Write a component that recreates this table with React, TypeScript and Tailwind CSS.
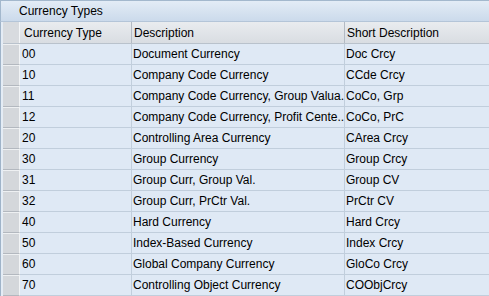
const rows = [
  { code: '00', desc: 'Document Currency', short: 'Doc Crcy' },
  { code: '10', desc: 'Company Code Currency', short: 'CCde Crcy' },
  { code: '11', desc: 'Company Code Currency, Group Valua..', short: 'CoCo, Grp' },
  { code: '12', desc: 'Company Code Currency, Profit Cente..', short: 'CoCo, PrC' },
  { code: '20', desc: 'Controlling Area Currency', short: 'CArea Crcy' },
  { code: '30', desc: 'Group Currency', short: 'Group Crcy' },
  { code: '31', desc: 'Group Curr, Group Val.', short: 'Group CV' },
  { code: '32', desc: 'Group Curr, PrCtr Val.', short: 'PrCtr CV' },
  { code: '40', desc: 'Hard Currency', short: 'Hard Crcy' },
  { code: '50', desc: 'Index-Based Currency', short: 'Index Crcy' },
  { code: '60', desc: 'Global Company Currency', short: 'GloCo Crcy' },
  { code: '70', desc: 'Controlling Object Currency', short: 'COObjCrcy' },
];

const cols = 'grid grid-cols-[17px_112px_213px_1fr]';

export default function App() {
  return (
    <div
      className="w-[489px] h-[296px] overflow-hidden bg-[#dfe9f5] text-[12px] leading-none text-black"
      style={{ fontFamily: '"Liberation Sans", Arial, sans-serif' }}
    >
      {/* Title bar */}
      <div className="h-[22px] flex items-center pl-[18px] border-t border-l border-[#a3b8cd] border-b-[#b4c5d8] border-b bg-gradient-to-b from-[#e3ecf6] to-[#cbdaeb]">
        Currency Types
      </div>

      <div className="border-l border-[#9fb3c8] pl-[2px] bg-[#e4ecf5]">
        {/* Column header */}
        <div className={`${cols} h-[22px] bg-gradient-to-b from-[#e9ecef] to-[#d9dde2] border-b border-[#b9c2cc]`}>
          <div className="bg-[#d8dbdf] border-r border-[#f4f6f8]" />
          <div className="flex items-center pl-[4px] border-r border-[#b3bac3]">Currency Type</div>
          <div className="flex items-center pl-[2px] border-r border-[#b3bac3]">Description</div>
          <div className="flex items-center pl-[2px]">Short Description</div>
        </div>

        {/* Rows */}
        {rows.map((r) => (
          <div key={r.code} className={`${cols} h-[21px] bg-[#dfe9f5]`}>
            <div className="bg-[#d4d7db] border-t border-t-[#eef0f2] border-b border-b-[#b3b8bf] border-r border-r-[#f2f4f6]" />
            <div className="flex items-center pl-[2px] border-b border-r border-[#c1cedc] whitespace-nowrap overflow-hidden">
              {r.code}
            </div>
            <div className="flex items-center pl-[1px] border-b border-r border-[#c1cedc] whitespace-nowrap overflow-hidden">
              {r.desc}
            </div>
            <div className="flex items-center pl-[1px] border-b border-[#c1cedc] whitespace-nowrap overflow-hidden">
              {r.short}
            </div>
          </div>
        ))}
      </div>
    </div>
  );
}
